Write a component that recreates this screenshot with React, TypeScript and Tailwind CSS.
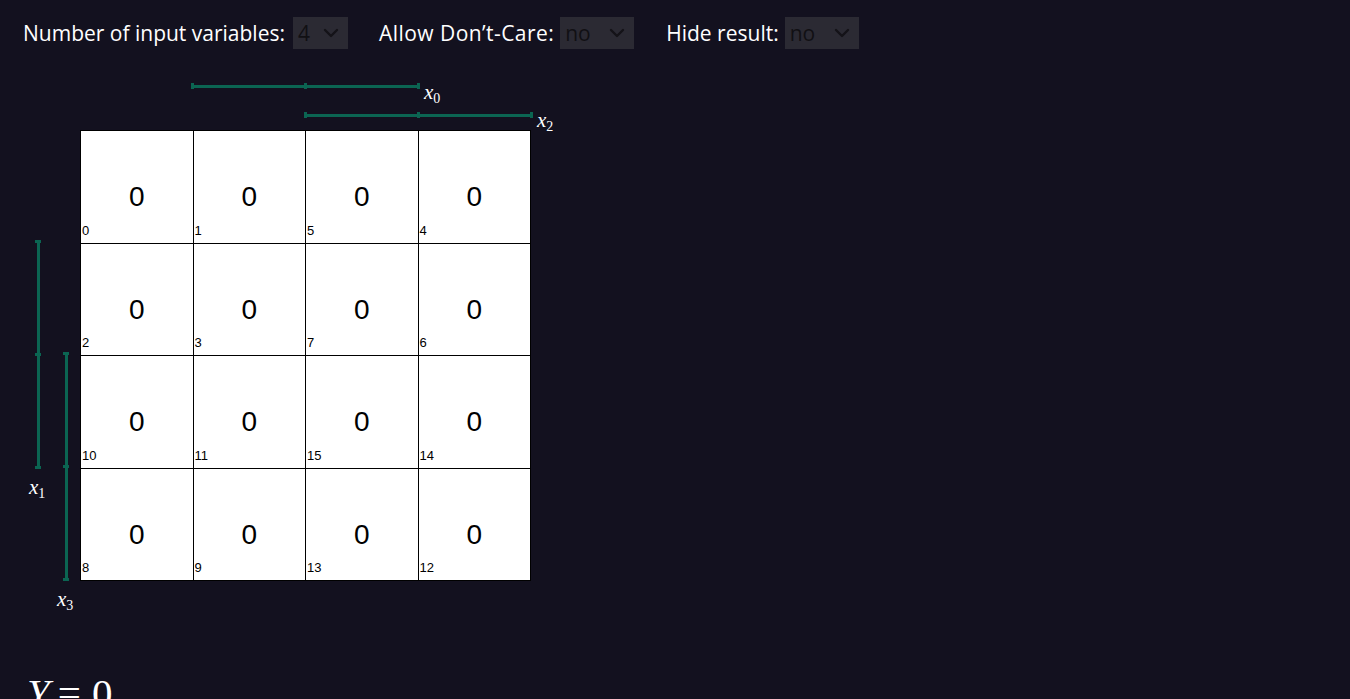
import React from 'react';

const GREEN = '#0b6552';

const cells: number[][] = [
  [0, 1, 5, 4],
  [2, 3, 7, 6],
  [10, 11, 15, 14],
  [8, 9, 13, 12],
];

const FakeSelect: React.FC<{ value: string; width: string }> = ({ value, width }) => (
  <div className={`flex h-[32px] items-center justify-between bg-[#2b2a33] pl-[5px] pr-[9px] text-[21px] text-[#111014] ${width}`}>
    <span className="leading-none">{value}</span>
    <svg width="16" height="10" viewBox="0 0 16 10" fill="none">
      <path d="M2 2l6 6 6-6" stroke="#141318" strokeWidth="2.4" strokeLinecap="round" strokeLinejoin="round" />
    </svg>
  </div>
);

const Control: React.FC<{ label: string; value: string; width: string; labelClass?: string }> = ({ label, value, width, labelClass = 'mr-[6px]' }) => (
  <div className="flex items-center">
    <span className={`text-[21px] leading-none text-white ${labelClass}`}>{label}</span>
    <FakeSelect value={value} width={width} />
  </div>
);

// italic variable label with subscript
const VarLabel: React.FC<{ sub: string; className: string }> = ({ sub, className }) => (
  <span className={`absolute text-white leading-none ${className}`} style={{ fontFamily: '"Liberation Serif", serif' }}>
    <i className="text-[21px]">x</i>
    <sub className="text-[14px] not-italic">{sub}</sub>
  </span>
);

export default function App() {
  return (
    <div className="h-[699px] overflow-hidden bg-[#13111f]" style={{ fontFamily: '"Open Sans", sans-serif' }}>
      {/* controls */}
      <div className="flex items-center px-[23px] pt-[17px]">
        <Control label="Number of input variables:" value="4" width="w-[55px]" labelClass="mr-[8px]" />
        <div className="ml-[31px]">
          <Control label="Allow Don’t-Care:" value="no" width="w-[74px]" labelClass="mr-[6px] tracking-[0.45px]" />
        </div>
        <div className="ml-[32px]">
          <Control label="Hide result:" value="no" width="w-[74px]" />
        </div>
      </div>

      {/* karnaugh map */}
      <div className="relative pl-[80px] pt-[81px]">
        <svg className="absolute left-0 top-0" width="560" height="540" viewBox="0 49 560 540">
          <g fill={GREEN}>
            {/* x0 */}
            <rect x="192" y="85" width="227" height="3" />
            <rect x="191" y="83" width="3" height="6" />
            <rect x="304" y="83" width="3" height="6" />
            <rect x="417" y="83" width="3" height="6" />
            {/* x2 */}
            <rect x="305" y="114" width="227" height="3" />
            <rect x="304" y="112" width="3" height="6" />
            <rect x="417" y="112" width="3" height="6" />
            <rect x="530" y="112" width="3" height="6" />
            {/* x1 */}
            <rect x="37" y="241" width="3" height="227" />
            <rect x="35" y="240" width="6" height="3" />
            <rect x="35" y="353" width="6" height="3" />
            <rect x="35" y="466" width="6" height="3" />
            {/* x3 */}
            <rect x="65" y="353" width="3" height="227" />
            <rect x="63" y="352" width="6" height="3" />
            <rect x="63" y="465" width="6" height="3" />
            <rect x="63" y="578" width="6" height="3" />
          </g>
        </svg>
        <VarLabel sub="0" className="left-[424px] top-[33px]" />
        <VarLabel sub="2" className="left-[537px] top-[61px]" />
        <VarLabel sub="1" className="left-[29px] top-[428px]" />
        <VarLabel sub="3" className="left-[57px] top-[540px]" />

        <div className="grid h-[451px] w-[451px] grid-cols-4 grid-rows-4 gap-px bg-black p-px" style={{ fontFamily: '"Liberation Sans", Arial, sans-serif' }}>
          {cells.flat().map((idx) => (
            <div key={idx} className="flex flex-col bg-white">
              <div className="pt-[52px] text-center text-[28px] leading-none text-black">0</div>
              <div className="mt-auto pb-[6px] pl-[1px] text-[13px] leading-none text-black">{idx}</div>
            </div>
          ))}
        </div>
      </div>

      {/* result */}
      <div className="pl-[27px] pt-[92px] text-[41px] leading-none text-white" style={{ fontFamily: '"Liberation Serif", serif' }}>
        <i>Y</i>
        <span className="ml-[8px]">=</span>
        <span className="ml-[11px]">0</span>
      </div>
    </div>
  );
}
